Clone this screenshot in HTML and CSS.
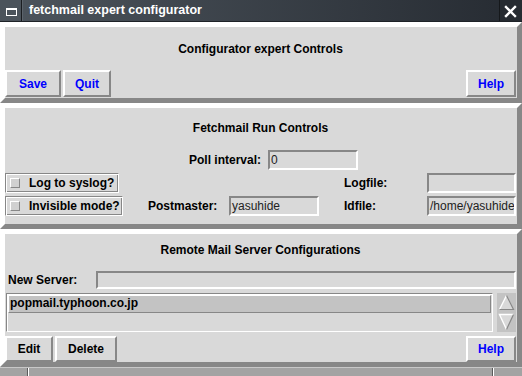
FILE: index.html
```html
<!DOCTYPE html>
<html>
<head>
<meta charset="utf-8">
<link rel="stylesheet" href="styles.css">
</head>
<body>
<div class="titlebar">
  <div class="tb-icon">
    <svg width="22" height="22" viewBox="0 0 22 22"><rect x="6.5" y="8.5" width="10" height="7" fill="none" stroke="#fff" stroke-width="1"/><rect x="6" y="8" width="11" height="2" fill="#fff"/></svg>
  </div>
  <div class="tb-title">fetchmail expert configurator</div>
  <div class="tb-close">
    <svg width="22" height="22" viewBox="0 0 22 22"><path d="M6 7 L15 16 M15 7 L6 16" stroke="#fff" stroke-width="2.4" stroke-linecap="square"/></svg>
  </div>
</div>

<div class="frame f1">
  <div class="heading h1">Configurator expert Controls</div>
  <div class="btnrow">
    <button class="btn blue w-save">Save</button>
    <button class="btn blue w-quit">Quit</button>
    <span class="spacer"></span>
    <button class="btn blue w-help">Help</button>
  </div>
</div>

<div class="frame f2">
  <div class="heading h2">Fetchmail Run Controls</div>
  <div class="pollrow">
    <span class="label polllabel">Poll interval:</span>
    <span class="entry w-poll">0</span>
  </div>
  <div class="rungrid">
    <span class="check c-log"><span class="ind"></span>Log to syslog?</span>
    <span class="label g5">Logfile:</span>
    <span class="entry g6"></span>
    <span class="check c-inv"><span class="ind"></span>Invisible mode?</span>
    <span class="label g2 pm">Postmaster:</span>
    <span class="entry g3">yasuhide</span>
    <span class="label g5">Idfile:</span>
    <span class="entry g6">/home/yasuhide</span>
  </div>
</div>

<div class="frame f3">
  <div class="heading h3">Remote Mail Server Configurations</div>
  <div class="newrow">
    <span class="label nslabel">New Server:</span>
    <span class="entry ns"></span>
  </div>
  <div class="listrow">
    <div class="listbox">
      <div class="item sel">popmail.typhoon.co.jp</div>
    </div>
    <div class="scroll">
      <svg width="19" height="39" viewBox="0 0 19 39">
        <polygon points="9.5,2 2,17 17,17" fill="#d9d9d9"/>
        <path d="M2.5 16.5 L9.5 2.5" stroke="#fff" stroke-width="1.4" fill="none"/>
        <path d="M9.5 2.5 L16.5 16.5 L2.5 16.5" stroke="#888" stroke-width="1.2" fill="none"/>
        <polygon points="2,21 17,21 9.5,37" fill="#d9d9d9"/>
        <path d="M9.5 36.5 L2.5 21.5 L16.5 21.5" stroke="#fff" stroke-width="1.4" fill="none"/>
        <path d="M16.5 21.5 L9.5 36.5" stroke="#888" stroke-width="1.2" fill="none"/>
      </svg>
    </div>
  </div>
  <div class="btnrow b3">
    <button class="btn w-edit">Edit</button>
    <button class="btn w-del">Delete</button>
    <span class="spacer"></span>
    <button class="btn blue w-help">Help</button>
  </div>
</div>

<div class="statusbar">
  <span class="sb-a"></span>
  <span class="sb-b"></span>
  <span class="sb-c"></span>
</div>
</body>
</html>
```

FILE: styles.css
```css
* { box-sizing: border-box; }
html, body { margin: 0; padding: 0; }
body {
  width: 522px;
  height: 376px;
  overflow: hidden;
  background: #ffffff;
  font-family: "Liberation Sans", Arial, sans-serif;
  font-weight: bold;
  font-size: 12px;
  color: #000;
}

.titlebar {
  height: 22px;
  display: flex;
  background: linear-gradient(to right, #4d555d, #262b32);
  border-bottom: 1px solid #1e2227;
  color: #fff;
}
.tb-icon {
  width: 22px;
  height: 21px;
  border-right: 1px solid #1a1d21;
  background: #4b535b;
}
.tb-icon svg, .tb-close svg { display: block; }
.tb-title {
  flex: 1;
  padding-left: 6px;
  font-size: 12.5px;
  line-height: 21px;
  border-left: 1px solid #5c646c;
}
.tb-close {
  width: 23px;
  height: 21px;
  border-left: 1px solid #15181b;
  background: #262b31;
}

.frame {
  border: 5px solid;
  border-color: #ffffff #878787 #878787 #ffffff;
  background: #d9d9d9;
}
.f1 { height: 81px; padding: 0 1px 0 0; }
.f2 { height: 126px; padding: 0 1px 0 0; }
.f3 { height: 138px; padding: 0 1px 0 0; }

.heading {
  text-align: center;
  display: flex;
  align-items: center;
  justify-content: center;
}
.h1 { height: 43px; }
.h2 { height: 40px; }
.h3 { height: 31px; }

.btnrow { display: flex; gap: 2px; height: 27px; }
.b3 { margin-top: 4px; height: 26px; }
.spacer { flex: 1; }
.btn {
  font: inherit;
  font-weight: bold;
  margin: 0;
  padding: 0;
  background: #d9d9d9;
  border: 2px solid;
  border-color: #ffffff #878787 #878787 #ffffff;
  color: #000;
  text-align: center;
  line-height: 20px;
}
.blue { color: #0000ff; }
.w-save { width: 56px; }
.w-quit { width: 48px; }
.w-help { width: 50px; }
.w-edit { width: 48px; }
.w-del { width: 62px; }

.entry {
  display: block;
  height: 20px;
  border: 2px solid;
  border-color: #878787 #ffffff #ffffff #878787;
  background: #d9d9d9;
  font-weight: normal;
  color: #222;
  padding-left: 1px;
  line-height: 16px;
  white-space: nowrap;
  overflow: hidden;
}
.label { line-height: 20px; white-space: nowrap; }

.pollrow { display: flex; margin-top: 2px; height: 20px; }
.polllabel { width: 256px; text-align: right; }
.w-poll { width: 90px; margin-left: 7px; }

.rungrid {
  margin-top: 3px;
  display: grid;
  grid-template-columns: 124px 100px 90px 25px 83px 89px;
  grid-template-rows: 20px 20px;
  row-gap: 3px;
}
.check {
  display: flex;
  align-items: center;
  height: 20px;
  border: 1px solid;
  border-color: #878787 #ffffff #ffffff #878787;
  box-shadow: inset 1px 1px 0 #ffffff, inset -1px -1px 0 #878787;
  padding-left: 4px;
  white-space: nowrap;
}
.ind {
  width: 10px;
  height: 10px;
  border: 1px solid;
  border-color: #ffffff #878787 #878787 #ffffff;
  background: #d0d0d0;
  margin-right: 9px;
}
.c-log { grid-column: 1; grid-row: 1; width: 114px; }
.c-inv { grid-column: 1; grid-row: 2; width: 118px; }
.rungrid .g2 { grid-column: 2; }
.rungrid .g3 { grid-column: 3; }
.rungrid .g5 { grid-column: 5; }
.rungrid .g6 { grid-column: 6; }
.pm { padding-left: 19px; }

.newrow { display: flex; margin-top: 6px; height: 18px; }
.nslabel { width: 91px; padding-left: 3px; line-height: 18px; }
.ns { flex: 1; height: 18px; }

.listrow { display: flex; margin-top: 4px; height: 39px; }
.listbox {
  margin-left: 1px;
  width: 487px;
  height: 39px;
  border: 1px solid;
  border-color: #878787 #ffffff #ffffff #878787;
  box-shadow: inset 1px 1px 0 #ffffff;
  padding: 1px 1px 0 1px;
}
.item {
  height: 18px;
  line-height: 15px;
  padding-left: 1px;
}
.sel {
  background: #c3c3c3;
  border: 1px solid;
  border-color: #ffffff #878787 #878787 #ffffff;
}
.scroll {
  margin-left: 4px;
  width: 19px;
  height: 39px;
  background: #c3c3c3;
}
.scroll svg { display: block; }

.statusbar {
  height: 9px;
  display: flex;
  background: #a3a3a3;
  border-top: 1px solid #c8c8c8;
}
.sb-a { width: 28px; border-right: 1px solid #5a5a5a; }
.sb-b { width: 465px; border-left: 1px solid #ffffff; border-right: 1px solid #5a5a5a; }
.sb-c { flex: 1; border-left: 1px solid #ffffff; }
```
